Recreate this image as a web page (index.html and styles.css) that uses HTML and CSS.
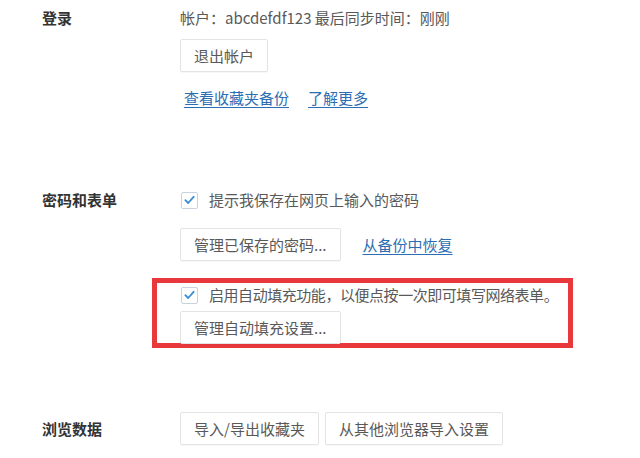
FILE: index.html
```html
<!DOCTYPE html>
<html lang="zh-CN">
<head>
<meta charset="utf-8">
<title>设置</title>
<link rel="stylesheet" href="styles.css">
</head>
<body>
<div class="page">
  <section class="section s-login">
    <div class="label">登录</div>
    <div class="content">
      <div class="line">帐户：abcdefdf123 最后同步时间：刚刚</div>
      <button class="btn btn-logout">退出帐户</button>
      <div class="links">
        <a class="link" href="#">查看收藏夹备份</a>
        <a class="link link-more" href="#">了解更多</a>
      </div>
    </div>
  </section>

  <section class="section s-pass">
    <div class="label">密码和表单</div>
    <div class="content">
      <label class="check-line">
        <span class="checkbox"><svg viewBox="0 0 16 16" width="16" height="16"><path d="M3.6 8.2 L6.6 11.2 L12.4 4.6" fill="none" stroke="#3b8fd9" stroke-width="2" stroke-linecap="round" stroke-linejoin="round"/></svg></span>
        <span>提示我保存在网页上输入的密码</span>
      </label>
      <div class="btn-row">
        <button class="btn">管理已保存的密码...</button>
        <a class="link link-restore" href="#">从备份中恢复</a>
      </div>
      <div class="highlight">
        <label class="check-line">
          <span class="checkbox"><svg viewBox="0 0 16 16" width="16" height="16"><path d="M3.6 8.2 L6.6 11.2 L12.4 4.6" fill="none" stroke="#3b8fd9" stroke-width="2" stroke-linecap="round" stroke-linejoin="round"/></svg></span>
          <span class="long-text">启用自动填充功能，以便点按一次即可填写网络表单。</span>
        </label>
        <button class="btn btn-autofill">管理自动填充设置...</button>
      </div>
    </div>
  </section>

  <section class="section s-browse">
    <div class="label">浏览数据</div>
    <div class="content btn-row tight">
      <button class="btn">导入/导出收藏夹</button>
      <button class="btn">从其他浏览器导入设置</button>
    </div>
  </section>
</div>
</body>
</html>
```

FILE: styles.css
```css
* { box-sizing: border-box; }
html, body { margin: 0; padding: 0; background: #fff; }
body {
  font-family: "Noto Sans CJK SC", "Microsoft YaHei", "Noto Sans", sans-serif;
  font-size: 15px;
  color: #595959;
  width: 640px;
  height: 458px;
  overflow: hidden;
}
.page { padding-left: 42px; }
.section { display: flex; align-items: flex-start; }
.label {
  width: 138px;
  flex: none;
  font-weight: bold;
  color: #333;
  line-height: 20px;
}
.content { display: flex; flex-direction: column; align-items: flex-start; }
.line { line-height: 20px; white-space: nowrap; }

.s-login { padding-top: 8px; }
.btn {
  font: inherit;
  color: #595959;
  background: #fff;
  border: 1px solid #e4e4e4;
  border-radius: 2px;
  height: 33px;
  padding: 0 13px;
  line-height: 31px;
  white-space: nowrap;
  box-shadow: 0 1px 1px rgba(0,0,0,0.03);
}
.btn-logout { margin-top: 11px; }
.links { margin-top: 16px; margin-left: 4px; line-height: 20px; display: flex; }
.link { color: #2c6db3; text-decoration: underline; text-underline-offset: 3px; white-space: nowrap; }
.link-more { margin-left: 19px; }

.s-pass { margin-top: 82px; }
.check-line { display: flex; align-items: center; line-height: 20px; white-space: nowrap; }
.checkbox {
  width: 17px; height: 17px;
  flex: none;
  border: 1px solid #c9d3de;
  border-radius: 2px;
  background: #fff;
  display: flex; align-items: center; justify-content: center;
  margin-left: 1px;
  margin-right: 11px;
}
.checkbox svg { display: block; }
.long-text { letter-spacing: -0.45px; }
.btn-row { display: flex; align-items: center; margin-top: 18px; }
.link-restore { margin-left: 22px; }
.highlight {
  margin-top: 17px;
  margin-left: -28px;
  width: 421px;
  border: 5px solid #e8383b;
  padding: 2px 0 0 23px;
  display: flex; flex-direction: column; align-items: flex-start;
}
.btn-autofill { margin-top: 6px; margin-bottom: -1px; height: 33px; }

.s-browse { margin-top: 64px; align-items: center; }
.s-browse .label { margin-top: 1px; }
.tight { margin-top: 0; flex-direction: row; gap: 6px; }
```
